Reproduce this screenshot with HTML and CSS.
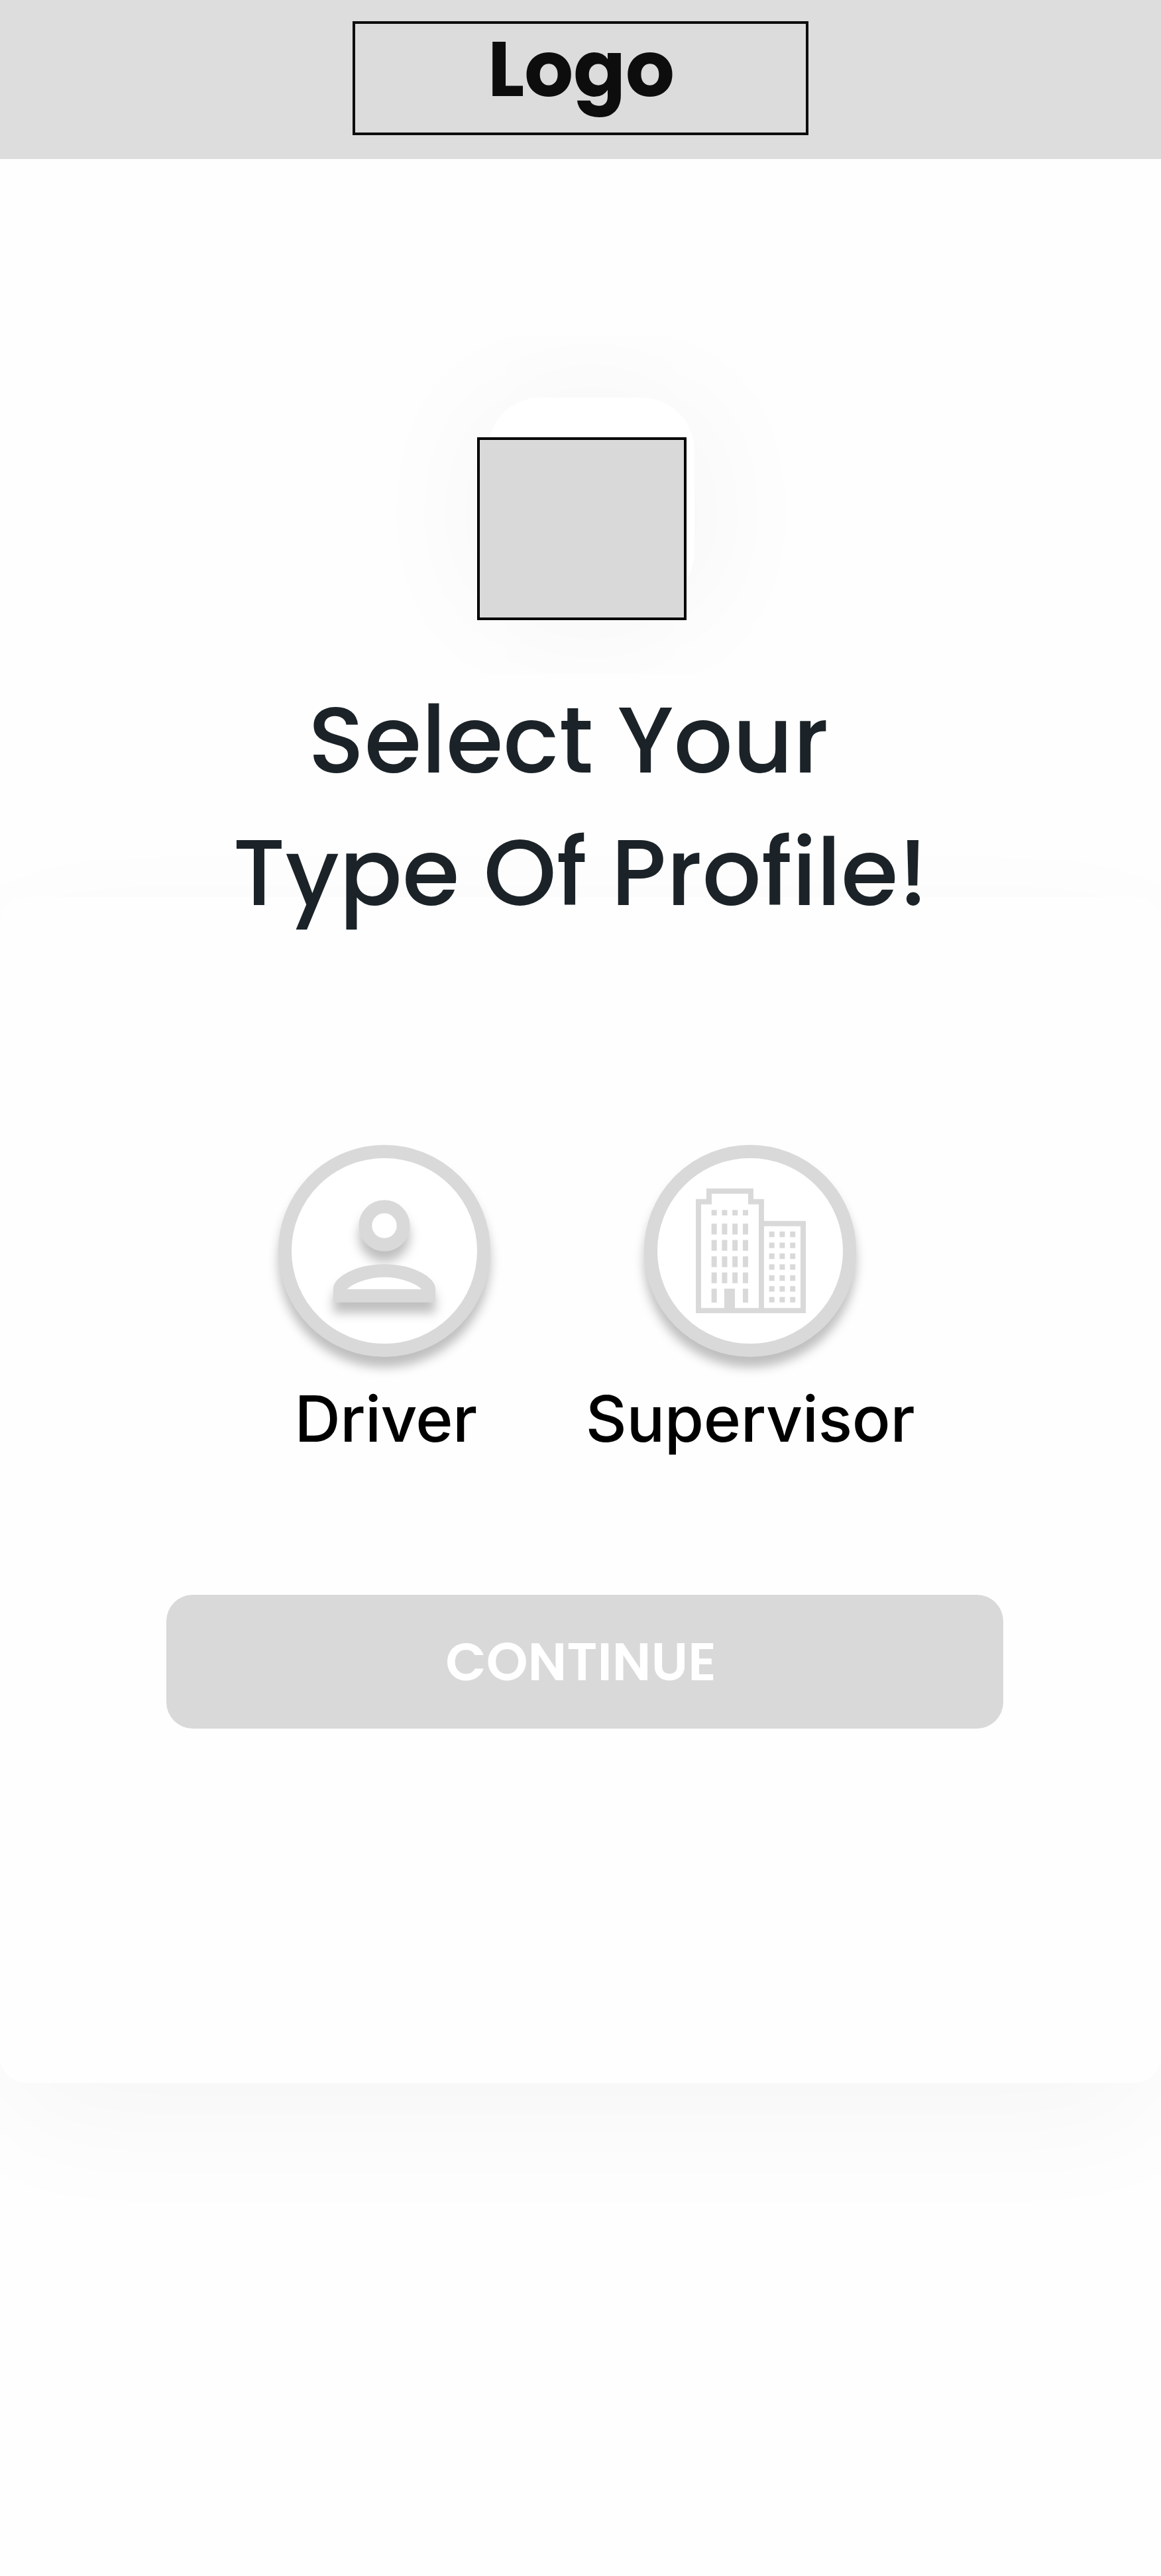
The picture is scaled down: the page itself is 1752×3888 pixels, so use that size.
FILE: index.html
```
<!DOCTYPE html>
<html lang="en">
<head>
<meta charset="utf-8">
<title>Select Your Type Of Profile</title>
<link rel="stylesheet" href="styles.css">
</head>
<body>
<header class="topbar">
  <div class="logo">Logo</div>
</header>
<main>
  <section class="intro">
    <div class="tile"><div class="placeholder"></div></div>
    <h1 class="title">Select Your&nbsp;<br>Type Of Profile!</h1>
  </section>
  <section class="card">
    <div class="options">
      <div class="option option-driver">
        <div class="ring">
          <svg class="person" width="154" height="212" viewBox="0 0 462 636">
            <g class="shaded"><circle cx="231" cy="171" r="86" fill="#fff" stroke="#d9d9d9" stroke-width="60"/></g>
            <g class="shaded">
              <path fill="#d9d9d9" d="M0 518V455C0 404 103 345 231 345S462 404 462 455V518Z"/>
              <path fill="#fff" d="M62 458C95 427 166 404 231 404S367 427 400 458Z"/>
            </g>
          </svg>
        </div>
        <div class="label">Driver</div>
      </div>
      <div class="option option-supervisor">
        <div class="ring">
          <svg class="buildings" width="166" height="189.333" viewBox="0 0 498 568" fill="none" stroke="#d9d9d9">
            <path stroke-width="24" d="M12 556V62H60V14H249V62H297V556M297 161H486V556M0 556H498"/>
            <path stroke-width="25" stroke-dasharray="24 23.3" d="M71 112H240"/>
            <path stroke-width="49" stroke-dasharray="24 23.3" d="M71 186H240M71 260H240M71 334H240M71 407H240"/>
            <path stroke-width="24" d="M83 456V519M225 456V519"/>
            <path stroke-width="48" d="M153 456V556"/>
            <path stroke-width="25" stroke-dasharray="24 23.3" d="M332 210H451M332 260H451M332 309H451M332 358H451M332 408H451M332 457H451M332 506H451"/>
          </svg>
        </div>
        <div class="label">Supervisor</div>
      </div>
    </div>
    <button class="continue" type="button">CONTINUE</button>
  </section>
</main>
</body>
</html>
```
FILE: styles.css
```
* { box-sizing: border-box; }

body {
  margin: 0;
  min-height: 3888px;
  background: #fefefe;
  font-family: Poppins, Inter, "Liberation Sans", sans-serif;
  overflow-x: hidden;
}

.topbar {
  height: 240px;
  padding-top: 32px;
  background: #ddd;
}

.logo {
  width: 688px;
  height: 172px;
  margin: 0 auto;
  padding: 12px 0 0 200px;
  border: 4px solid #0d0d0d;
  background: #dcdcdc;
  color: #0d0d0d;
  font-size: 116px;
  font-weight: 700;
  line-height: 113px;
}

.intro {
  position: relative;
  z-index: 1;
  padding-top: 360px;
}

.tile {
  position: relative;
  width: 312px;
  height: 312px;
  margin-left: 736px;
  border-radius: 80px;
  background: #fff;
  box-shadow: 0 14px 208px rgba(0, 0, 0, 0.055);
}

.placeholder {
  position: absolute;
  top: 60px;
  left: -16px;
  width: 316px;
  height: 276px;
  border: 4px solid #000;
  background: #d9d9d9;
}

.title {
  position: relative;
  margin: 105px 0 0;
  color: #1b2328;
  font-size: 140px;
  font-weight: 500;
  line-height: 200px;
  text-align: center;
}

.card {
  height: 1790px;
  margin-top: -63px;
  padding-top: 374px;
  border-radius: 40px;
  background: #fefefe;
  box-shadow: 0 60px 200px rgba(0, 0, 0, 0.034);
}

.options {
  display: flex;
  gap: 144px;
  padding-left: 420px;
}

.option {
  display: flex;
  flex-direction: column;
  align-items: center;
}

.option-driver { width: 320px; }
.option-supervisor { width: 496px; }
.option-driver .label { padding-left: 4px; letter-spacing: -0.6px; }

.ring {
  display: flex;
  width: 320px;
  height: 320px;
  border: 20px solid #d9d9d9;
  border-radius: 50%;
  background: #fff;
  box-shadow: 0 16px 16px rgba(0, 0, 0, 0.25);
}

.person {
  margin: 44.5px 0 0 63px;
  overflow: visible;
}

.shaded { filter: drop-shadow(0 48px 24px rgba(0, 0, 0, 0.25)); }

.buildings { margin: 44.5px 0 0 58px; }

.label {
  margin-top: 35px;
  color: #000;
  font-family: Inter, "Liberation Sans", sans-serif;
  font-size: 96px;
  font-weight: 500;
  line-height: 116px;
  letter-spacing: -0.4px;
}

.continue {
  display: block;
  width: 1263px;
  height: 202px;
  margin: 208px 0 0 251px;
  padding: 0 12px 0 0;
  border: 0;
  border-radius: 40px;
  background: #d9d9d9;
  color: #fff;
  font-family: inherit;
  font-size: 80px;
  font-weight: 600;
  line-height: 202px;
  text-align: center;
}
```
